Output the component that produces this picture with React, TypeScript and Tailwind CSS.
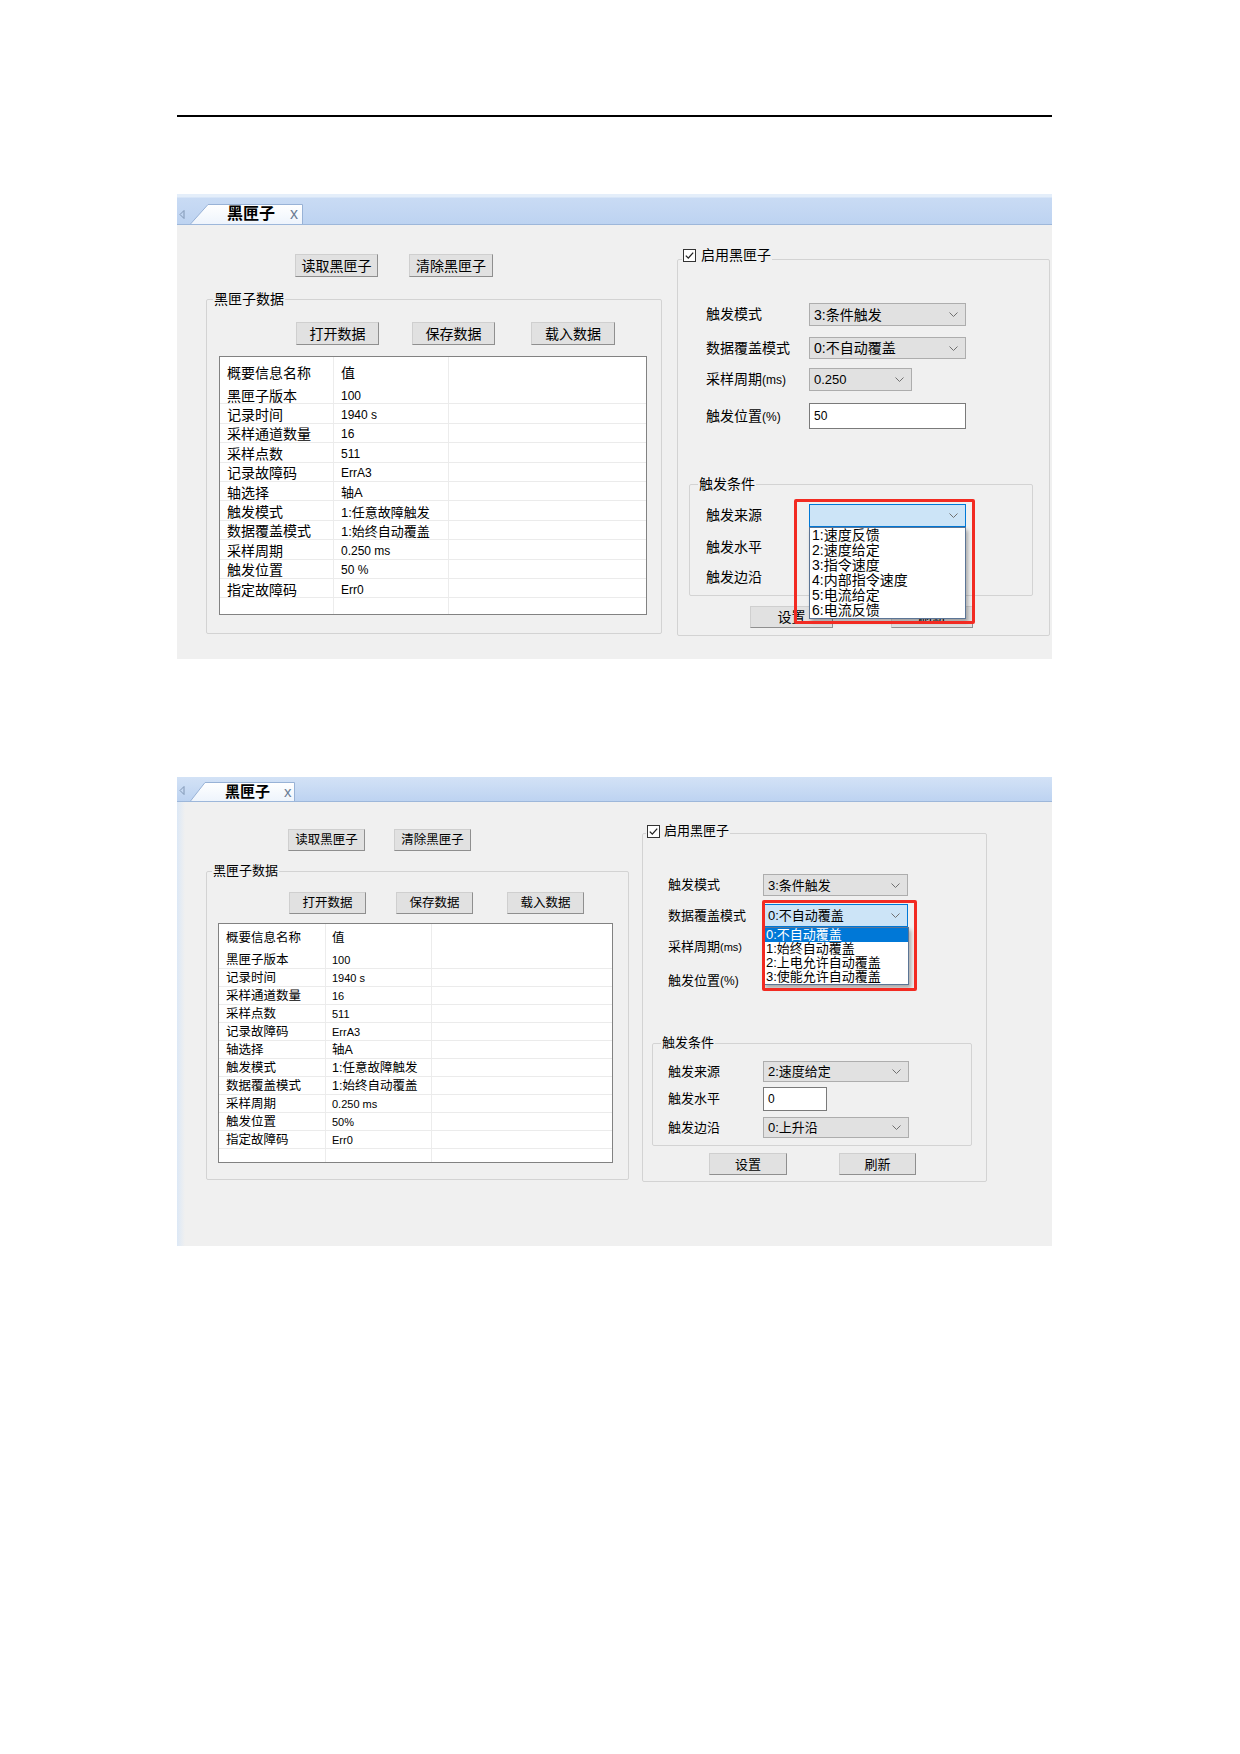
import type { ReactNode } from "react";

const FONT = "font-['Liberation_Sans','Noto_Sans_CJK_SC',sans-serif]";

function summaryRows(pct: string): [string, string][] {
  return [
    ["黑匣子版本", "100"],
    ["记录时间", "1940 s"],
    ["采样通道数量", "16"],
    ["采样点数", "511"],
    ["记录故障码", "ErrA3"],
    ["轴选择", "轴A"],
    ["触发模式", "1:任意故障触发"],
    ["数据覆盖模式", "1:始终自动覆盖"],
    ["采样周期", "0.250 ms"],
    ["触发位置", pct],
    ["指定故障码", "Err0"],
  ];
}

const SOURCES = ["1:速度反馈", "2:速度给定", "3:指令速度", "4:内部指令速度", "5:电流给定", "6:电流反馈"];
const OVERWRITE = ["0:不自动覆盖", "1:始终自动覆盖", "2:上电允许自动覆盖", "3:使能允许自动覆盖"];

function Chevron() {
  return (
    <svg width="9" height="5" viewBox="0 0 9 5" className="shrink-0">
      <polyline points="0.5,0.5 4.5,4.5 8.5,0.5" fill="none" stroke="#707070" strokeWidth="1" />
    </svg>
  );
}

function Combo({ value, className, open = false }: { value: string; className: string; open?: boolean }) {
  return (
    <div
      className={`flex items-center justify-between pl-[4px] pr-[7px] border leading-none whitespace-nowrap ${
        open ? "bg-[#cce4f7] border-[#0078d7]" : "bg-[#e1e1e1] border-[#adadad]"
      } ${className}`}
    >
      <span>{value}</span>
      <Chevron />
    </div>
  );
}

function TextBox({ value, className }: { value: string; className: string }) {
  return (
    <div className={`flex items-center pl-[4px] bg-white border border-[#7a7a7a] leading-none ${className}`}>
      {value}
    </div>
  );
}

function WinButton({ label, className }: { label: string; className: string }) {
  return (
    <div
      className={`flex items-center justify-center bg-[#e1e1e1] border border-t-[#cfcfcf] border-l-[#cfcfcf] border-r-[#8f8f8f] border-b-[#8f8f8f] leading-none ${className}`}
    >
      {label}
    </div>
  );
}

function CheckLegend({ text, gap }: { text: string; gap: string }) {
  return (
    <span className="flex items-center h-[16px]">
      <svg width="13" height="13" viewBox="0 0 13 13" className="shrink-0">
        <rect x="0.5" y="0.5" width="12" height="12" fill="#fff" stroke="#333" />
        <path d="M2.8 6.6 L5.3 9.1 L10.2 3.6" fill="none" stroke="#222" strokeWidth="1.3" />
      </svg>
      <span className={gap}>{text}</span>
    </span>
  );
}

function GroupBox({
  legend,
  legendClass,
  className,
  children,
}: {
  legend: ReactNode;
  legendClass: string;
  className: string;
  children: ReactNode;
}) {
  return (
    <fieldset className={`border border-[#d3d3d3] rounded-[2px] min-w-0 ${className}`}>
      <legend className={`px-[1px] leading-[16px] ${legendClass}`}>{legend}</legend>
      {children}
    </fieldset>
  );
}

type TableStyle = {
  box: string;
  head: string;
  row: string;
  c1: string;
  c2: string;
  name: string;
  cjk: string;
  lat: string;
  vpad: string;
  top: string;
};

function DataTable({ s, rows }: { s: TableStyle; rows: [string, string][] }) {
  const cjkRe = /[\u4e00-\u9fff]/;
  return (
    <div className={`flex flex-col bg-white border border-[#828282] overflow-hidden leading-none ${s.box}`}>
      <div className={`flex shrink-0 ${s.head}`}>
        <div className={`flex items-center pl-[7px] border-r border-[#ececec] ${s.top} ${s.c1} ${s.name}`}>
          概要信息名称
        </div>
        <div className={`flex items-center border-r border-[#ececec] ${s.vpad} ${s.top} ${s.c2} ${s.name}`}>值</div>
        <div className="flex-1" />
      </div>
      {rows.map(([k, v]) => (
        <div key={k} className={`flex shrink-0 border-b border-[#ebebeb] ${s.row}`}>
          <div className={`flex items-center pl-[7px] border-r border-[#ececec] ${s.top} ${s.c1} ${s.name}`}>{k}</div>
          <div
            className={`flex items-center border-r border-[#ececec] whitespace-nowrap ${s.vpad} ${s.top} ${s.c2} ${
              cjkRe.test(v) ? s.cjk : s.lat
            }`}
          >
            {v}
          </div>
          <div className="flex-1" />
        </div>
      ))}
      <div className="flex flex-1">
        <div className={`border-r border-[#ececec] ${s.c1}`} />
        <div className={`border-r border-[#ececec] ${s.c2}`} />
      </div>
    </div>
  );
}

function DropList({
  items,
  className,
  item,
  selected,
}: {
  items: string[];
  className: string;
  item: string;
  selected?: number;
}) {
  return (
    <div
      className={`absolute flex flex-col bg-white border border-[#5b7596] shadow-[2px_3px_4px_rgba(0,0,0,0.3)] overflow-hidden ${className}`}
    >
      {items.map((t, i) => (
        <div
          key={t}
          className={`shrink-0 pl-[2px] whitespace-nowrap ${item} ${i === selected ? "bg-[#0078d7] text-white" : ""}`}
        >
          {t}
        </div>
      ))}
    </div>
  );
}

function ArrowLeft() {
  return (
    <svg width="6" height="9" viewBox="0 0 6 9">
      <path d="M5 0.5 L1 4.5 L5 8.5 Z" fill="none" stroke="#8096b4" strokeWidth="1" />
    </svg>
  );
}

function TabBar({ v }: { v: 1 | 2 }) {
  if (v === 1) {
    return (
      <div className="shrink-0 h-[31px] flex items-end border-b border-[#9db7da] bg-[linear-gradient(to_bottom,#e4eefa_0px,#e4eefa_3px,#c9dbf4_4px,#bdd3f1)]">
        <div className="ml-[2px] mb-[5px]">
          <ArrowLeft />
        </div>
        <div className="relative ml-[5px] w-[113px] h-[20px]">
          <svg width="113" height="20" viewBox="0 0 113 20" className="absolute inset-0">
            <defs>
              <linearGradient id="tabg1" x1="0" y1="0" x2="0" y2="1">
                <stop offset="0" stopColor="#ffffff" />
                <stop offset="1" stopColor="#eef4fc" />
              </linearGradient>
            </defs>
            <path d="M0.5 20 L18 0.5 L112.5 0.5 L112.5 20 Z" fill="url(#tabg1)" />
            <path d="M0.5 20 L18 0.5 L112.5 0.5 L112.5 20" fill="none" stroke="#98b2d6" />
          </svg>
          <div className="relative flex items-center h-full pl-[37px] leading-none">
            <span className="font-bold text-[16px]">黑匣子</span>
            <span className="ml-[15px] text-[16px] text-[#6b7c94]">x</span>
          </div>
        </div>
      </div>
    );
  }
  return (
    <div className="shrink-0 h-[25px] flex items-end border-b border-[#9db7da] bg-[linear-gradient(to_bottom,#d3e2f6,#bdd3f1)]">
      <div className="ml-[2px] mb-[6px]">
        <ArrowLeft />
      </div>
      <div className="relative ml-[5px] w-[105px] h-[19px]">
        <svg width="105" height="19" viewBox="0 0 105 19" className="absolute inset-0">
          <defs>
            <linearGradient id="tabg2" x1="0" y1="0" x2="0" y2="1">
              <stop offset="0" stopColor="#ffffff" />
              <stop offset="1" stopColor="#eef4fc" />
            </linearGradient>
          </defs>
          <path d="M0.5 19 L15 0.5 L104.5 0.5 L104.5 19 Z" fill="url(#tabg2)" />
          <path d="M0.5 19 L15 0.5 L104.5 0.5 L104.5 19" fill="none" stroke="#98b2d6" />
        </svg>
        <div className="relative flex items-center h-full pl-[35px] leading-none">
          <span className="font-bold text-[15px]">黑匣子</span>
          <span className="ml-[14px] text-[15px] text-[#6b7c94]">x</span>
        </div>
      </div>
    </div>
  );
}

const T1: TableStyle = {
  box: "mt-[11px] ml-[12px] w-[428px] h-[259px]",
  head: "h-[28px]",
  row: "h-[19.4px]",
  c1: "w-[114px]",
  c2: "w-[115px]",
  name: "text-[14px]",
  cjk: "text-[13px]",
  lat: "text-[12px]",
  vpad: "pl-[7px]",
  top: "pt-[3px]",
};

const T2: TableStyle = {
  box: "mt-[9px] ml-[11px] w-[395px] h-[240px]",
  head: "h-[27px]",
  row: "h-[18px]",
  c1: "w-[107px]",
  c2: "w-[106px]",
  name: "text-[12.5px]",
  cjk: "text-[12.5px]",
  lat: "text-[11px]",
  vpad: "pl-[6px]",
  top: "pt-[1px]",
};

function ShotOne() {
  return (
    <div className="relative mt-[77px] w-[875px] h-[465px] bg-[#f0f0f0] flex flex-col overflow-hidden text-[14px] text-black">
      <TabBar v={1} />
      <div className="flex items-start">
        <div className="w-[500px] shrink-0 flex flex-col">
          <div className="flex mt-[29px] ml-[118px]">
            <WinButton label="读取黑匣子" className="w-[83px] h-[23px]" />
            <WinButton label="清除黑匣子" className="w-[84px] h-[23px] ml-[31px]" />
          </div>
          <GroupBox legend="黑匣子数据" legendClass="ml-[6px] h-[16px]" className="ml-[29px] mt-[14px] w-[456px] h-[343px]">
            <div className="flex mt-[15px] ml-[89px]">
              <WinButton label="打开数据" className="w-[83px] h-[23px]" />
              <WinButton label="保存数据" className="w-[83px] h-[23px] ml-[33px]" />
              <WinButton label="载入数据" className="w-[84px] h-[23px] ml-[36px]" />
            </div>
            <DataTable s={T1} rows={summaryRows("50 %")} />
          </GroupBox>
        </div>
        <div className="flex flex-col">
          <GroupBox
            legend={<CheckLegend text="启用黑匣子" gap="ml-[5px]" />}
            legendClass="ml-[4px] h-[24px]"
            className="mt-[22px] w-[373px] h-[389px]"
          >
            <div className="flex items-center h-[23px] mt-[32px] ml-[28px]">
              <span className="w-[103px]">触发模式</span>
              <Combo value="3:条件触发" className="w-[157px] h-[23px]" />
            </div>
            <div className="flex items-center h-[22px] mt-[11px] ml-[28px]">
              <span className="w-[103px]">数据覆盖模式</span>
              <Combo value="0:不自动覆盖" className="w-[157px] h-[22px]" />
            </div>
            <div className="flex items-center h-[23px] mt-[9px] ml-[28px]">
              <span className="w-[103px]">
                采样周期<span className="text-[12px]">(ms)</span>
              </span>
              <Combo value="0.250" className="w-[103px] h-[23px] text-[13px]" />
            </div>
            <div className="flex items-center h-[26px] mt-[12px] ml-[28px]">
              <span className="w-[103px]">
                触发位置<span className="text-[12px]">(%)</span>
              </span>
              <TextBox value="50" className="w-[157px] h-[26px] text-[12px]" />
            </div>
            <GroupBox legend="触发条件" legendClass="ml-[8px] h-[16px]" className="mt-[47px] ml-[11px] w-[344px] h-[120px]">
              <div className="flex items-center h-[23px] mt-[12px] ml-[16px]">
                <span className="w-[103px]">触发来源</span>
                <Combo value="" open className="w-[157px] h-[23px]" />
              </div>
              <div className="flex items-center h-[22px] mt-[9px] ml-[16px]">
                <span>触发水平</span>
              </div>
              <div className="flex items-center h-[22px] mt-[8px] ml-[16px]">
                <span>触发边沿</span>
              </div>
            </GroupBox>
            <div className="flex mt-[10px] ml-[72px]">
              <WinButton label="设置" className="w-[83px] h-[22px]" />
              <WinButton label="刷新" className="w-[82px] h-[22px] ml-[58px]" />
            </div>
          </GroupBox>
        </div>
      </div>
      <DropList
        items={SOURCES}
        className="left-[632px] top-[333px] w-[157px] h-[92px]"
        item="h-[15px] leading-[15px] text-[14px]"
      />
      <div className="absolute left-[617px] top-[305px] w-[181px] h-[125px] border-[3px] border-[#f22b22] rounded-[2px]" />
    </div>
  );
}

function ShotTwo() {
  return (
    <div className="relative mt-[118px] w-[875px] h-[469px] bg-[#f0f0f0] flex flex-col overflow-hidden text-[13px] text-black">
      <TabBar v={2} />
      <div className="flex items-start flex-1 bg-[linear-gradient(to_right,#dce8f6,#f0f0f0_8px)]">
        <div className="w-[465px] shrink-0 flex flex-col">
          <div className="flex mt-[27px] ml-[111px] text-[12.5px]">
            <WinButton label="读取黑匣子" className="w-[77px] h-[22px]" />
            <WinButton label="清除黑匣子" className="w-[77px] h-[22px] ml-[29px]" />
          </div>
          <GroupBox legend="黑匣子数据" legendClass="ml-[5px] h-[16px]" className="ml-[29px] mt-[12px] w-[423px] h-[317px]">
            <div className="flex mt-[13px] ml-[82px] text-[12.5px]">
              <WinButton label="打开数据" className="w-[77px] h-[22px]" />
              <WinButton label="保存数据" className="w-[77px] h-[22px] ml-[30px]" />
              <WinButton label="载入数据" className="w-[77px] h-[22px] ml-[34px]" />
            </div>
            <DataTable s={T2} rows={summaryRows("50%")} />
          </GroupBox>
        </div>
        <div className="flex flex-col">
          <GroupBox
            legend={<CheckLegend text="启用黑匣子" gap="ml-[4px]" />}
            legendClass="ml-[3px] h-[20px]"
            className="mt-[21px] w-[345px] h-[359px]"
          >
            <div className="flex items-center h-[22px] mt-[31px] ml-[25px]">
              <span className="w-[95px]">触发模式</span>
              <Combo value="3:条件触发" className="w-[145px] h-[22px]" />
            </div>
            <div className="flex items-center h-[23px] mt-[8px] ml-[25px]">
              <span className="w-[95px]">数据覆盖模式</span>
              <Combo value="0:不自动覆盖" open className="w-[145px] h-[23px]" />
            </div>
            <div className="flex items-center h-[22px] mt-[9px] ml-[25px]">
              <span>
                采样周期<span className="text-[11px]">(ms)</span>
              </span>
            </div>
            <div className="flex items-center h-[22px] mt-[12px] ml-[25px]">
              <span>
                触发位置<span className="text-[12px]">(%)</span>
              </span>
            </div>
            <GroupBox legend="触发条件" legendClass="ml-[8px] h-[16px]" className="mt-[43px] ml-[9px] w-[320px] h-[111px]">
              <div className="flex items-center h-[21px] mt-[10px] ml-[15px]">
                <span className="w-[95px]">触发来源</span>
                <Combo value="2:速度给定" className="w-[146px] h-[21px]" />
              </div>
              <div className="flex items-center h-[24px] mt-[5px] ml-[15px]">
                <span className="w-[95px]">触发水平</span>
                <TextBox value="0" className="w-[64px] h-[24px] text-[12px]" />
              </div>
              <div className="flex items-center h-[21px] mt-[6px] ml-[15px]">
                <span className="w-[95px]">触发边沿</span>
                <Combo value="0:上升沿" className="w-[146px] h-[21px]" />
              </div>
            </GroupBox>
            <div className="flex mt-[7px] ml-[66px]">
              <WinButton label="设置" className="w-[78px] h-[22px]" />
              <WinButton label="刷新" className="w-[77px] h-[22px] ml-[52px]" />
            </div>
          </GroupBox>
        </div>
      </div>
      <DropList
        items={OVERWRITE}
        selected={0}
        className="left-[586px] top-[150px] w-[146px] h-[58px]"
        item="h-[14px] leading-[14px] text-[13px]"
      />
      <div className="absolute left-[585px] top-[123px] w-[155px] h-[91px] border-[3px] border-[#f22b22] rounded-[2px]" />
    </div>
  );
}

export default function App() {
  return (
    <div className={`w-[1240px] h-[1754px] bg-white text-black ${FONT}`}>
      <div className="pt-[115px] pl-[177px] flex flex-col">
        <div className="w-[875px] h-[2px] bg-black" />
        <ShotOne />
        <ShotTwo />
      </div>
    </div>
  );
}
